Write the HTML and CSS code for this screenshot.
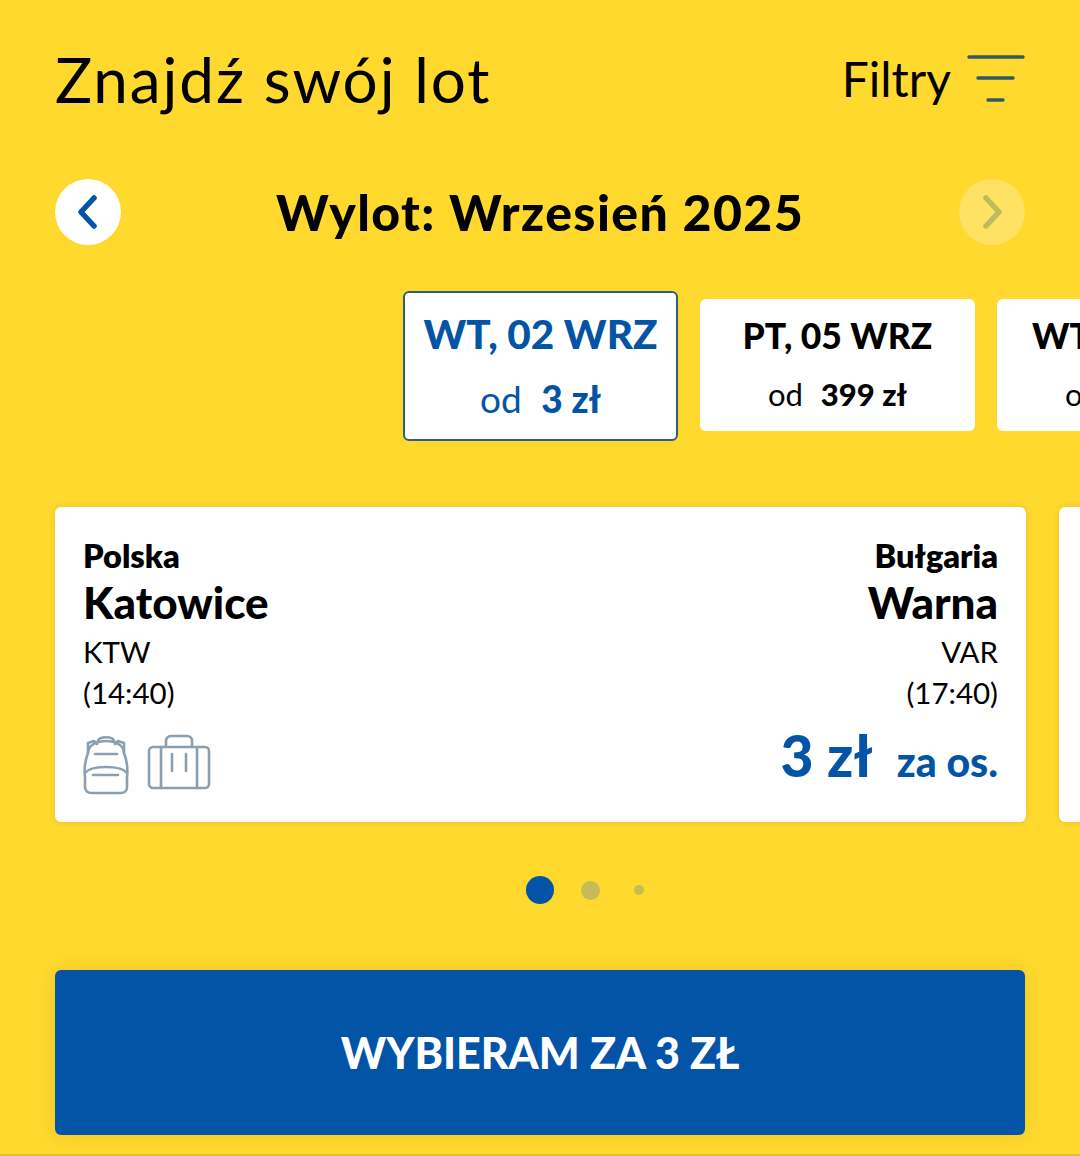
FILE: index.html
```html
<!DOCTYPE html>
<html lang="pl">
<head>
  <meta charset="UTF-8">
  <title>Znajdź swój lot</title>
  <link rel="stylesheet" href="styles.css">
</head>
<body>
  <main class="page">
    <header class="top">
      <h1 class="title">Znajdź swój lot</h1>
      <div class="filters">
        <span class="filters-label">Filtry</span>
        <svg class="filters-icon" width="58" height="48" viewBox="0 0 58 48" fill="none" stroke="#2f5a62" stroke-width="3.4" stroke-linecap="round">
          <path d="M2 2H56"/><path d="M11 23H46"/><path d="M21 45H36"/>
        </svg>
      </div>
    </header>

    <section class="month">
      <button class="round-btn">
        <svg width="22" height="34" viewBox="0 0 22 34" fill="none" stroke="#0354a6" stroke-width="5.5" stroke-linecap="round" stroke-linejoin="round"><path d="M17 3L4 17L17 31"/></svg>
      </button>
      <h2 class="month-name">Wylot: Wrzesień 2025</h2>
      <button class="round-btn round-btn-off">
        <svg width="22" height="34" viewBox="0 0 22 34" fill="none" stroke="#bdbb5a" stroke-width="5.5" stroke-linecap="round" stroke-linejoin="round"><path d="M5 3L18 17L5 31"/></svg>
      </button>
    </section>

    <section class="dates">
      <div class="date date-active">
        <div class="date-day">WT, 02 WRZ</div>
        <div class="date-price">od <b>3 zł</b></div>
      </div>
      <div class="date">
        <div class="date-day">PT, 05 WRZ</div>
        <div class="date-price">od <b>399 zł</b></div>
      </div>
      <div class="date">
        <div class="date-day">WT, 09 WRZ</div>
        <div class="date-price">od <b>399 zł</b></div>
      </div>
    </section>

    <section class="flights">
      <article class="flight">
        <div class="route">
          <div>
            <div class="country">Polska</div>
            <div class="city">Katowice</div>
            <div class="info">KTW</div>
            <div class="info">(14:40)</div>
          </div>
          <div class="route-end">
            <div class="country">Bułgaria</div>
            <div class="city">Warna</div>
            <div class="info">VAR</div>
            <div class="info">(17:40)</div>
          </div>
        </div>
        <div class="flight-foot">
          <div class="bags">
            <svg class="bag-back" width="46" height="60" viewBox="0 0 46 60" fill="none" stroke="#8a9fb0" stroke-width="2.6" stroke-linecap="round" stroke-linejoin="round">
              <path d="M5 18C5 10 14 6 23 6C32 6 41 10 41 18C44 26 45 34 44 42V52C44 56 41 58 38 58H8C5 58 2 56 2 52V42C1 34 2 26 5 18Z"/>
              <path d="M5 18V8L11 6L14 9"/><path d="M41 18V8L35 6L32 9"/>
              <path d="M15 6C16 1 30 1 31 6"/>
              <path d="M12 19H34"/>
              <path d="M2 38C8 30 38 30 44 38"/>
              <path d="M10 40H35"/>
            </svg>
            <svg width="64" height="56" viewBox="0 0 64 56" fill="none" stroke="#8a9fb0" stroke-width="2.6" stroke-linecap="round" stroke-linejoin="round">
              <rect x="2" y="13" width="60" height="41" rx="4"/>
              <path d="M14 13V54"/><path d="M50 13V54"/>
              <path d="M25 20V37"/><path d="M39 20V37"/>
              <path d="M19 13V7C19 4 21 2 24 2H40C43 2 45 4 45 7V13"/>
            </svg>
          </div>
          <div class="price"><span class="price-num">3 zł</span><span class="price-per">za os.</span></div>
        </div>
      </article>
      <article class="flight"></article>
    </section>

    <div class="dots">
      <span class="dot dot-on"></span>
      <span class="dot dot-mid"></span>
      <span class="dot dot-small"></span>
    </div>

    <button class="choose">WYBIERAM ZA 3 ZŁ</button>
  </main>
</body>
</html>
```

FILE: styles.css
```css
* {
  box-sizing: border-box;
}
body {
  margin: 0;
  font-family: 'Lato', 'Noto Sans', sans-serif;
  background: #ffd92e;
  color: #000;
}
.page {
  width: 1080px;
  height: 1156px;
  overflow: hidden;
  padding: 0 55px;
  border-bottom: 2px solid #e6c22c;
}
.top {
  display: flex;
  justify-content: space-between;
  align-items: center;
  height: 157px;
}
.title {
  margin: 0;
  font-size: 62px;
  font-weight: 400;
  letter-spacing: 1.9px;
}
.filters {
  display: flex;
  align-items: center;
  gap: 16px;
}
.filters-label {
  font-size: 48px;
}
.month {
  display: flex;
  justify-content: space-between;
  align-items: center;
  height: 110px;
}
.month-name {
  margin: 0;
  font-size: 50px;
  font-weight: 900;
  letter-spacing: 1.4px;
}
.round-btn {
  display: flex;
  justify-content: center;
  align-items: center;
  width: 66px;
  height: 66px;
  padding: 0;
  border: 0;
  border-radius: 50%;
  background: #fff;
}
.round-btn-off {
  background: #ffe263;
}
.dates {
  display: flex;
  align-items: flex-start;
  gap: 22px;
  margin-top: 24px;
  margin-left: 348px;
  height: 150px;
}
.date {
  flex: none;
  width: 275px;
  height: 132px;
  margin-top: 8px;
  padding-top: 15px;
  border-radius: 6px;
  background: #fff;
  text-align: center;
}
.date-day {
  font-size: 35.5px;
  font-weight: 900;
}
.date-price {
  margin-top: 18px;
  font-size: 31px;
}
.date-price b {
  margin-left: 10px;
  font-weight: 900;
}
.date-active {
  height: 150px;
  margin-top: 0;
  padding-top: 16px;
  border: 2px solid #2f5f78;
  color: #0354a6;
}
.date-active .date-day {
  font-size: 40.5px;
}
.date-active .date-price {
  margin-top: 18px;
  font-size: 37px;
}
.flights {
  display: flex;
  gap: 33px;
  margin-top: 66px;
}
.flight {
  flex: none;
  width: 971px;
  height: 315px;
  padding: 30px 28px 0 28px;
  border-radius: 6px;
  background: #fff;
  box-shadow: 0 0 6px rgba(120, 100, 0, 0.2);
}
.route {
  display: flex;
  justify-content: space-between;
}
.route-end {
  text-align: right;
}
.country {
  font-size: 32.5px;
  font-weight: 800;
  line-height: 37px;
}
.city {
  font-size: 44px;
  font-weight: 900;
  line-height: 57px;
}
.info {
  font-size: 29.5px;
  line-height: 41px;
}
.flight-foot {
  display: flex;
  justify-content: space-between;
  align-items: flex-start;
  margin-top: 8px;
}
.bags {
  display: flex;
  align-items: flex-start;
  gap: 18px;
  margin-top: 13px;
}
.bag-back {
  margin-top: 1px;
}
.price {
  display: flex;
  align-items: baseline;
  gap: 24px;
  color: #0354a6;
  font-weight: 900;
}
.price-num {
  font-size: 57px;
}
.price-per {
  font-size: 41px;
}
.dots {
  display: flex;
  align-items: center;
  margin-top: 54px;
  padding-left: 471px;
  height: 28px;
}
.dot {
  flex: none;
  border-radius: 50%;
}
.dot-on {
  width: 28px;
  height: 28px;
  background: #0354a6;
}
.dot-mid {
  width: 19px;
  height: 19px;
  margin-left: 27px;
  background: #c5bc58;
}
.dot-small {
  width: 10px;
  height: 10px;
  margin-left: 34px;
  background: #c5bc58;
}
.choose {
  display: block;
  width: 970px;
  height: 165px;
  margin-top: 66px;
  border: 0;
  border-radius: 6px;
  background: #0354a6;
  box-shadow: 0 0 18px rgba(150, 120, 0, 0.18);
  color: #fff;
  font-family: inherit;
  font-size: 43px;
  font-weight: 900;
}
```
